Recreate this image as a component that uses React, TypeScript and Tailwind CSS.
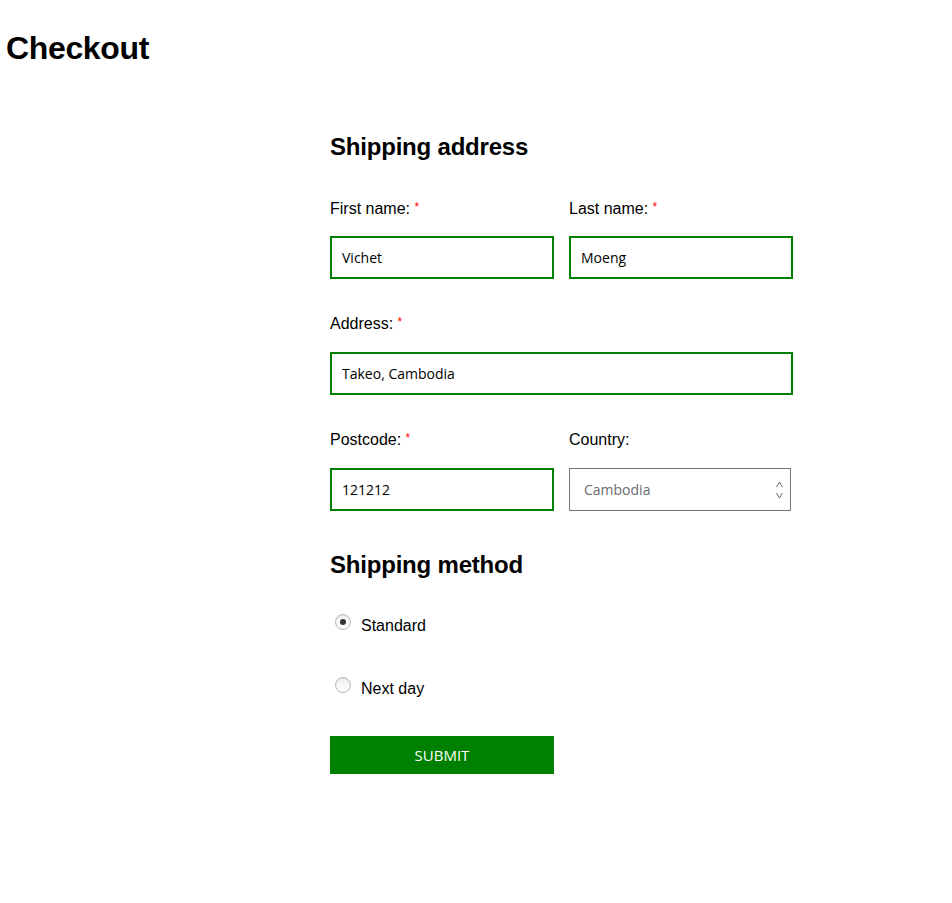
import React from "react";

const labelCls = "block text-[16px] leading-[18px] text-black";
const inputCls =
  "w-full h-[43px] border-2 border-[#008000] px-[10px] text-[14px] text-black outline-none bg-white";
const inputFont = { fontFamily: '"Open Sans", "Noto Sans", sans-serif' } as const;

function Req() {
  return (
    <>
      {" "}
      <span className="text-[#ff0000] text-[12px] align-top leading-[14px]">*</span>
    </>
  );
}

function Radio({ checked, label }: { checked?: boolean; label: string }) {
  return (
    <label className="flex items-start">
      <span className="ml-[5px] w-[16px] h-[16px] rounded-full border border-[#b8b8b8] bg-gradient-to-b from-[#f1f1f1] to-[#ffffff] flex items-center justify-center shadow-[inset_0_1px_1px_rgba(0,0,0,0.08)]">
        {checked && <span className="w-[6px] h-[6px] rounded-full bg-[#333]" />}
      </span>
      <span className="ml-[10px] mt-[3px] text-[16px] leading-[18px] text-black">{label}</span>
    </label>
  );
}

export default function App() {
  return (
    <div
      className="min-h-[903px] bg-white text-black"
      style={{ fontFamily: '"Liberation Sans", Arial, sans-serif' }}
    >
      <h1 className="pl-[6px] pt-[30px] text-[32px] leading-[37px] font-bold tracking-[-0.35px]">
        Checkout
      </h1>

      <div className="ml-[330px] w-[463px] mt-[66px]">
        <h2 className="text-[24px] leading-[28px] font-bold tracking-[-0.2px]">Shipping address</h2>

        <div className="mt-[39px] grid grid-cols-2 gap-x-[15px]">
          <div>
            <span className={labelCls}>
              First name:<Req />
            </span>
            <div className="mt-[18px]">
              <input className={inputCls} style={inputFont} defaultValue="Vichet" />
            </div>
          </div>
          <div>
            <span className={labelCls}>
              Last name:<Req />
            </span>
            <div className="mt-[18px]">
              <input className={inputCls} style={inputFont} defaultValue="Moeng" />
            </div>
          </div>
        </div>

        <div className="mt-[36px]">
          <span className={labelCls}>
            Address:<Req />
          </span>
          <div className="mt-[19px]">
            <input className={inputCls} style={inputFont} defaultValue="Takeo, Cambodia" />
          </div>
        </div>

        <div className="mt-[36px] grid grid-cols-2 gap-x-[15px]">
          <div>
            <span className={labelCls}>
              Postcode:<Req />
            </span>
            <div className="mt-[19px]">
              <input className={inputCls} style={inputFont} defaultValue="121212" />
            </div>
          </div>
          <div>
            <span className={labelCls}>Country:</span>
            <div className="mt-[19px] w-[222px] h-[43px] border border-[#767676] flex items-center justify-between pl-[14px] pr-[6px]">
              <span className="text-[14px] text-[#6d6d6d]" style={inputFont}>
                Cambodia
              </span>
              <svg width="9" height="20" viewBox="0 0 9 20" className="text-[#6d6d6d]">
                <path d="M1.5 7 L4.5 2 L7.5 7" fill="none" stroke="currentColor" strokeWidth="1" />
                <path d="M1.5 13 L4.5 18 L7.5 13" fill="none" stroke="currentColor" strokeWidth="1" />
              </svg>
            </div>
          </div>
        </div>

        <h2 className="mt-[40px] text-[24px] leading-[28px] font-bold tracking-[-0.2px]">
          Shipping method
        </h2>

        <div className="mt-[35px]">
          <Radio checked label="Standard" />
        </div>
        <div className="mt-[42px]">
          <Radio label="Next day" />
        </div>

        <button
          className="mt-[38px] w-[224px] h-[38px] bg-[#008000] text-white text-[15px] flex items-center justify-center"
          style={inputFont}
        >
          SUBMIT
        </button>
      </div>
    </div>
  );
}
